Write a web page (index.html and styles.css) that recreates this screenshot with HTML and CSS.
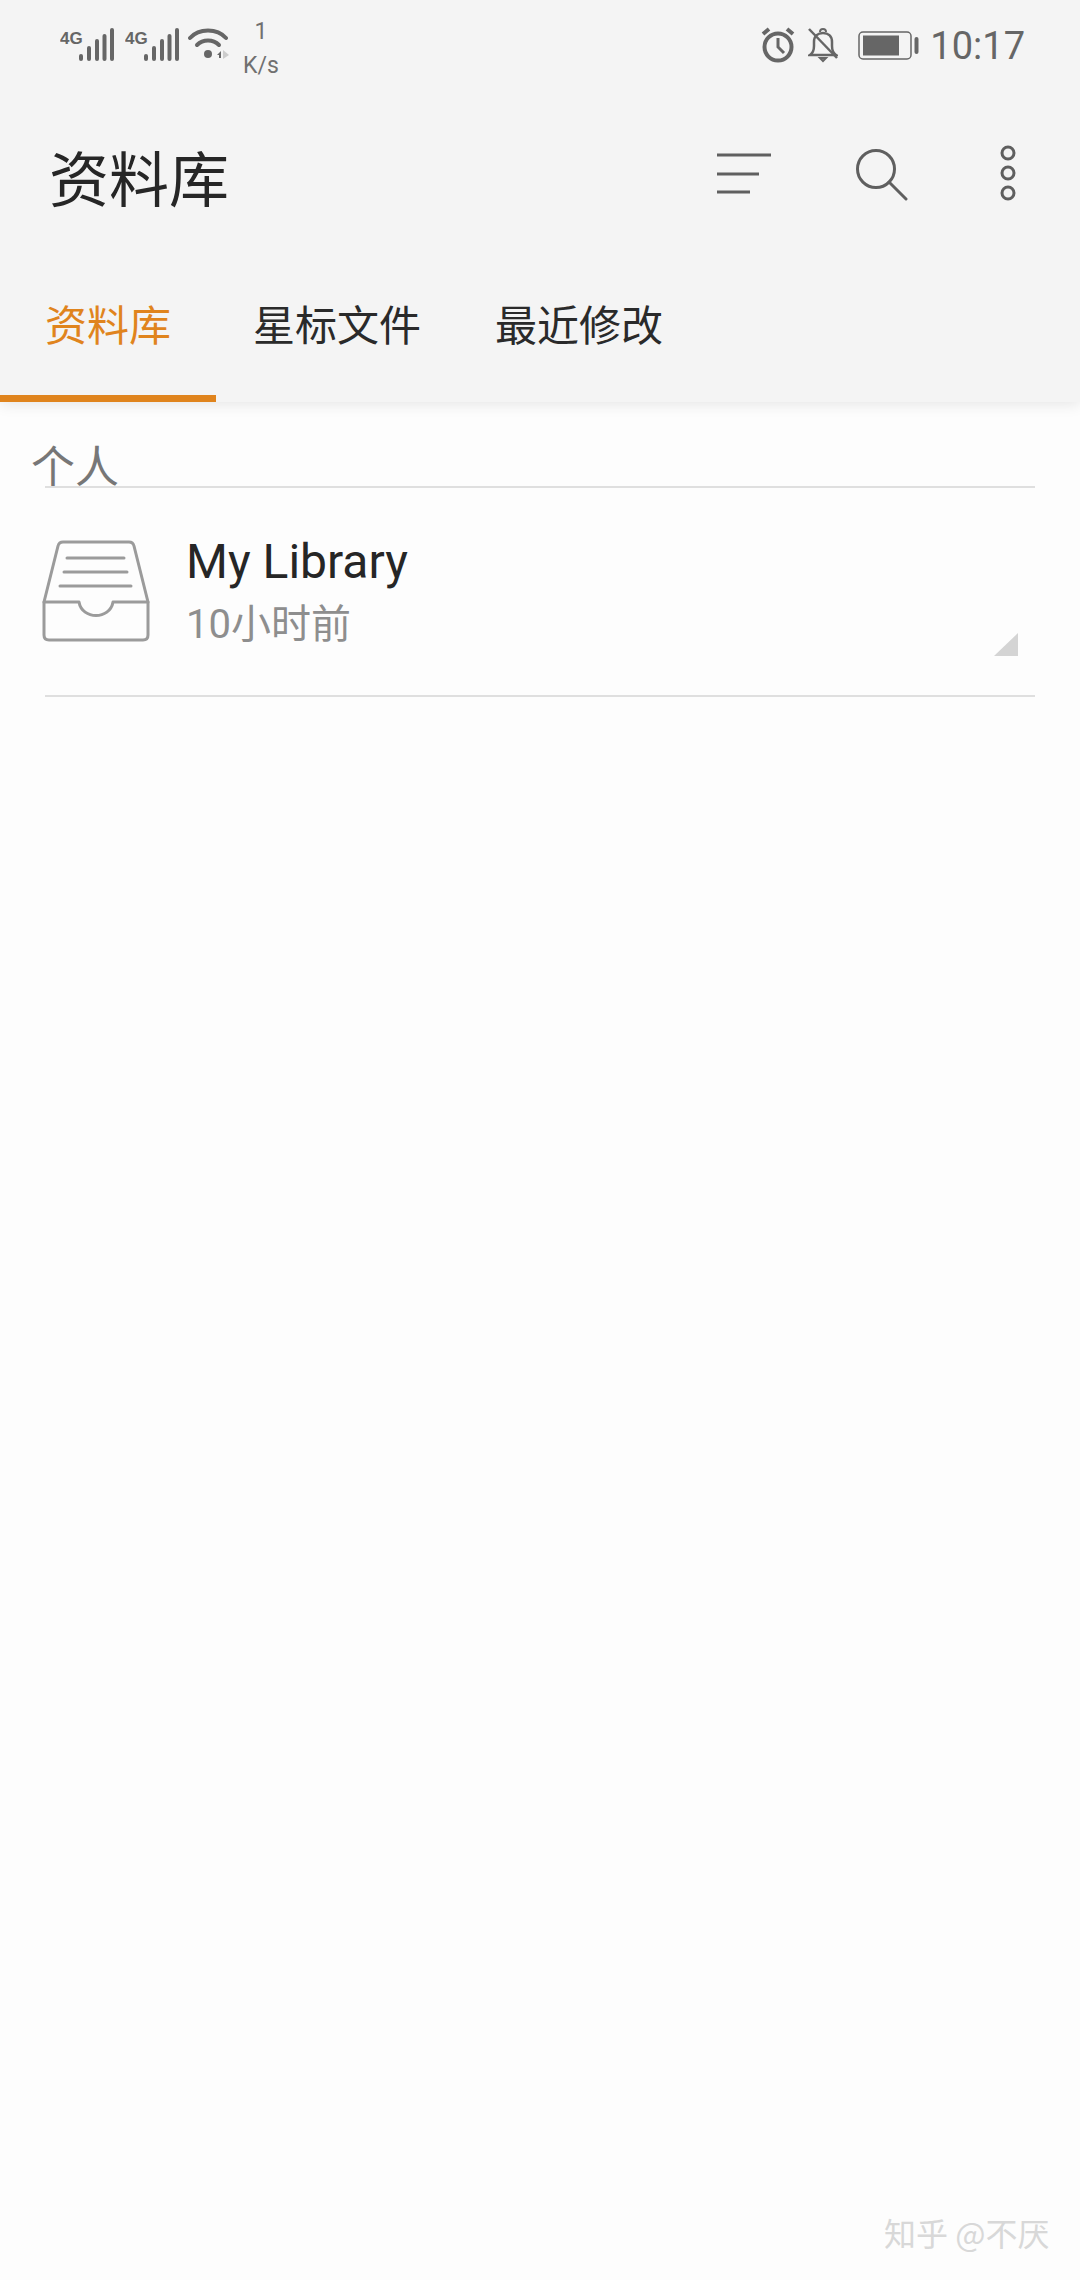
FILE: index.html

```html
<!DOCTYPE html>
<html lang="zh">
<head>
  <meta charset="UTF-8" />
  <meta name="viewport" content="width=device-width, initial-scale=1" />
  <title>资料库</title>
  <link rel="stylesheet" href="styles.css">
</head>
<body>
  <header class="top">
    <div class="status">
      <div class="status-left">
        <svg class="signal" width="54" height="34" viewBox="0 0 54 34">
          <text x="0" y="16" class="g4">4G</text>
          <g stroke="#666" stroke-width="4" stroke-linecap="round">
            <line x1="21" y1="28" x2="21" y2="31"/><line x1="29" y1="20" x2="29" y2="31"/>
            <line x1="37" y1="13" x2="37" y2="31"/><line x1="44.500" y1="8" x2="44.500" y2="31"/>
            <line x1="52" y1="2" x2="52" y2="31"/>
          </g>
        </svg>
        <svg class="signal signal-2" width="54" height="34" viewBox="0 0 54 34">
          <text x="0" y="16" class="g4">4G</text>
          <g stroke="#666" stroke-width="4" stroke-linecap="round">
            <line x1="21" y1="28" x2="21" y2="31"/><line x1="29" y1="20" x2="29" y2="31"/>
            <line x1="37" y1="13" x2="37" y2="31"/><line x1="44.500" y1="8" x2="44.500" y2="31"/>
            <line x1="52" y1="2" x2="52" y2="31"/>
          </g>
        </svg>
        <svg class="wifi" width="42" height="34" viewBox="0 0 42 34">
          <g fill="none" stroke="#666" stroke-width="4" stroke-linecap="round">
            <path d="M2 11 C11 1 29 1 38 11"/>
            <path d="M9 18 C15 12 25 12 31 18"/>
          </g>
          <circle cx="20" cy="27" r="4" fill="#666"/>
          <path d="M29 28 L33 24 V31 H31 V28 Z" fill="#666"/>
          <path d="M35 23 L41 28 L35 32 Z" fill="#ccc"/>
        </svg>
        <div class="speed"><span>1</span><span>K/s</span></div>
      </div>
      <div class="status-right">
        <svg class="alarm" width="34" height="36" viewBox="0 0 34 36">
          <circle cx="17" cy="20" r="13.500" fill="none" stroke="#666" stroke-width="4"/>
          <path d="M17 11 V20 L23 26" fill="none" stroke="#666" stroke-width="3"/>
          <path d="M2 7 L8 2 M32 7 L26 2" stroke="#666" stroke-width="4"/>
        </svg>
        <svg class="bell" width="30" height="36" viewBox="0 0 30 36">
          <path d="M2 28 C5 26 6 24 6 19 V15 C6 9 10 6 15 6 C20 6 24 9 24 15 V19 C24 24 25 26 28 28 Z" fill="none" stroke="#666" stroke-width="2.500"/>
          <path d="M12 5 C12 1 18 1 18 5 M12 31 H18 L15 34 Z" fill="none" stroke="#666" stroke-width="2"/>
          <line x1="1" y1="2" x2="29" y2="31" stroke="#666" stroke-width="2.500"/>
        </svg>
        <svg class="battery" width="61" height="30" viewBox="0 0 61 30">
          <rect x="1" y="1" width="52" height="27" rx="4" fill="none" stroke="#666" stroke-width="1.500"/>
          <rect x="5" y="4.500" width="36" height="20" fill="#666"/>
          <rect x="56.500" y="6" width="4" height="17" rx="2" fill="#666"/>
        </svg>
        <span class="time">10:17</span>
      </div>
    </div>

    <div class="appbar">
      <h1>资料库</h1>
      <div class="actions">
        <svg class="act-sort" width="54" height="42" viewBox="0 0 54 42">
          <path d="M0 2 H54 M0 21 H42 M0 39 H33" stroke="#5f5f5f" stroke-width="3" fill="none"/>
        </svg>
        <svg class="act-search" width="52" height="52" viewBox="0 0 52 52">
          <circle cx="20" cy="20" r="18.500" fill="none" stroke="#5f5f5f" stroke-width="3"/>
          <line x1="33" y1="33" x2="50" y2="50" stroke="#5f5f5f" stroke-width="3" stroke-linecap="round"/>
        </svg>
        <svg class="act-more" width="16" height="56" viewBox="0 0 16 56">
          <g fill="none" stroke="#5f5f5f" stroke-width="3">
            <circle cx="8" cy="8" r="6"/><circle cx="8" cy="28" r="6"/><circle cx="8" cy="48" r="6"/>
          </g>
        </svg>
      </div>
    </div>

    <nav class="tabs">
      <div class="tab active">资料库</div>
      <div class="tab">星标文件</div>
      <div class="tab">最近修改</div>
    </nav>
  </header>

  <main class="content">
    <div class="section-title">个人</div>
    <div class="library">
      <svg class="tray" width="108" height="102" viewBox="0 0 108 102">
        <g fill="none" stroke="#9b9b9b" stroke-width="3" stroke-linejoin="round" stroke-linecap="round">
          <path d="M2 62 L16 6 Q17 2 21 2 H87 Q91 2 92 6 L106 62 V95 Q106 100 101 100 H7 Q2 100 2 95 Z"/>
          <path d="M2 62 H37 C40 80 68 80 71 62 H106"/>
          <path d="M25 18 H82 M22 32 H85 M18 46 H89"/>
        </g>
      </svg>
      <div class="library-text">
        <div class="library-name">My Library</div>
        <div class="library-time">10小时前</div>
      </div>
      <span class="corner"></span>
    </div>
  </main>

  <div class="watermark">知乎 @不厌</div>
</body>
</html>
```

FILE: styles.css

```css
html, body {
  margin: 0;
  padding: 0;
}
body {
  position: relative;
  width: 1080px;
  height: 2280px;
  overflow: hidden;
  background: #fdfdfd;
  color: #262626;
  font-family: Roboto, "Noto Sans CJK SC", sans-serif;
}
svg {
  display: block;
  flex: none;
}

.top {
  background: #f4f4f4;
  height: 402px;
  box-shadow: 0 2px 14px rgba(0, 0, 0, 0.1);
  position: relative;
}

/* status bar */
.status {
  height: 90px;
  display: flex;
  justify-content: space-between;
  padding: 0 55px 0 60px;
}
.status-left {
  display: flex;
  align-items: flex-start;
}
.signal {
  margin-top: 28px;
}
.signal-2 {
  margin-left: 11px;
}
.g4 {
  font-family: "Liberation Sans", sans-serif;
  font-size: 17px;
  font-weight: bold;
  fill: #666;
}
.wifi {
  margin: 27px 0 0 9px;
}
.speed {
  display: flex;
  flex-direction: column;
  align-items: center;
  margin: 15px 0 0 13px;
  font-size: 23px;
  line-height: 34px;
  color: #707070;
}
.status-right {
  display: flex;
  align-items: flex-start;
}
.alarm {
  margin: 27px 0 0 0;
}
.bell {
  margin: 27px 0 0 13px;
}
.battery {
  margin: 31px 0 0 20px;
}
.time {
  margin: 22px 0 0 11px;
  font-size: 38px;
  line-height: 48px;
  color: #666;
}

/* title row */
.appbar {
  height: 175px;
  display: flex;
  justify-content: space-between;
  align-items: flex-start;
  padding: 0 64px 0 49px;
}
.appbar h1 {
  margin: 43px 0 0;
  font-size: 60px;
  line-height: 86px;
  font-weight: 400;
  font-family: "Noto Sans CJK SC", sans-serif;
}
.actions {
  display: flex;
  align-items: flex-start;
}
.act-sort {
  margin-top: 63px;
}
.act-search {
  margin: 59px 0 0 85px;
}
.act-more {
  margin: 55px 0 0 92px;
}

/* tabs */
.tabs {
  height: 137px;
  display: flex;
  font-family: "Noto Sans CJK SC", sans-serif;
  font-size: 42px;
  box-sizing: border-box;
}
.tab {
  padding: 28px 37px 0;
  line-height: 60px;
  color: #2a2a2a;
}
.tab.active {
  padding: 28px 45px 0;
  color: #e0841d;
  border-bottom: 7px solid #e0841d;
}

/* list */
.section-title {
  padding: 36px 0 0 31px;
  height: 84px;
  box-sizing: border-box;
  font-family: "Noto Sans CJK SC", sans-serif;
  font-size: 44px;
  line-height: 52px;
  color: #777;
}
.library {
  position: relative;
  margin: 0 45px;
  height: 207px;
  border-top: 2px solid #dfdfdf;
  border-bottom: 2px solid #dfdfdf;
  display: flex;
  align-items: flex-start;
}
.tray {
  margin: 52px 0 0 -3px;
}
.library-text {
  margin: 44px 0 0 36px;
}
.library-name {
  font-size: 48px;
  line-height: 60px;
  color: #262626;
}
.library-time {
  margin-top: 8px;
  font-size: 40px;
  line-height: 50px;
  color: #8e8e8e;
}
.corner {
  position: absolute;
  right: 17px;
  bottom: 39px;
  width: 24px;
  height: 23px;
  background: #d4d4d4;
  clip-path: polygon(100% 0, 100% 100%, 0 100%);
}

.watermark {
  position: absolute;
  left: 884px;
  top: 2212px;
  font-size: 32px;
  line-height: 40px;
  font-family: "Noto Sans CJK SC", sans-serif;
  color: #d8d8d8;
  white-space: nowrap;
}
```
